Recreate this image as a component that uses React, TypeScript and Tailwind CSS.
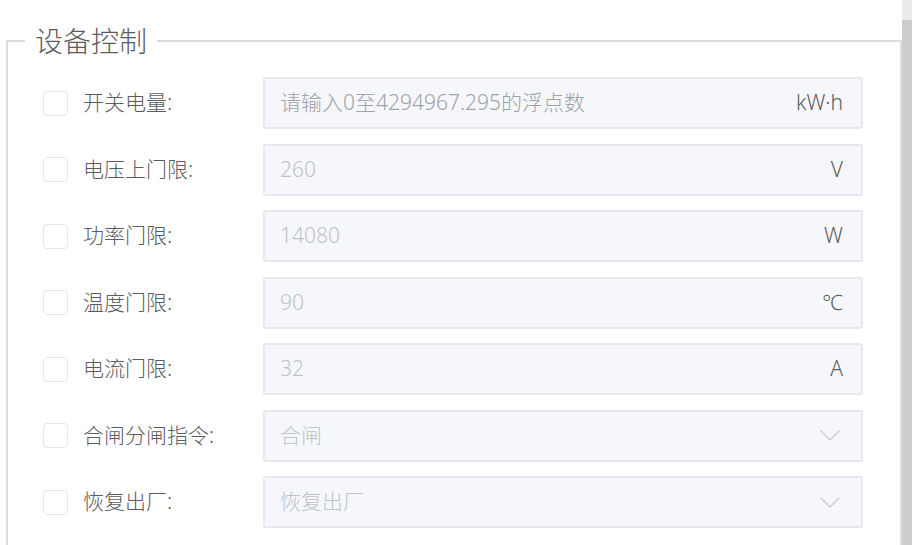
const font = { fontFamily: '"Noto Sans", "Noto Sans CJK SC", sans-serif' };

type Row = {
  label: string;
  kind: "input" | "select";
  value: string;
  placeholder?: boolean;
  unit?: string;
};

const rows: Row[] = [
  { label: "开关电量:", kind: "input", value: "请输入0至4294967.295的浮点数", placeholder: true, unit: "kW·h" },
  { label: "电压上门限:", kind: "input", value: "260", unit: "V" },
  { label: "功率门限:", kind: "input", value: "14080", unit: "W" },
  { label: "温度门限:", kind: "input", value: "90", unit: "℃" },
  { label: "电流门限:", kind: "input", value: "32", unit: "A" },
  { label: "合闸分闸指令:", kind: "select", value: "合闸" },
  { label: "恢复出厂:", kind: "select", value: "恢复出厂" },
];

function Chevron() {
  return (
    <svg width="20" height="11" viewBox="0 0 20 11" fill="none" className="mr-[21px] shrink-0">
      <path d="M1 1 L10 10 L19 1" stroke="#c8ccd3" strokeWidth="1.3" strokeLinecap="round" strokeLinejoin="round" />
    </svg>
  );
}

function FormRow({ row }: { row: Row }) {
  return (
    <div className="flex h-[52px] items-center">
      <span className="h-[25px] w-[25px] shrink-0 rounded-[4px] border-[1.5px] border-[#e2e5eb] bg-white" />
      <span className="ml-[15px] w-[180px] shrink-0 text-[21px] font-light text-[#5a5c61]">{row.label}</span>
      <div className="flex h-[52px] w-[600px] items-center justify-between rounded-[2px] border-2 border-[#e6e9ef] bg-[#f5f7fa] pl-[15px]">
        <span className={`text-[21px] font-light ${row.placeholder ? "text-[#9fa2a9]" : "text-[#bfc3ca]"}`}>{row.value}</span>
        {row.kind === "input" ? (
          <span className="pr-[18px] text-[21px] font-light text-[#5a5c61]">{row.unit}</span>
        ) : (
          <Chevron />
        )}
      </div>
    </div>
  );
}

export default function App() {
  return (
    <div className="flex h-[545px] w-[912px] overflow-hidden bg-white" style={font}>
      <div className="flex-1 pl-[6px] pt-[21px]">
        <fieldset className="h-[600px] border-2 border-[#dcdcdc] pb-6">
          <legend className="ml-[17px] px-[10px] text-[28px] font-light leading-[40px] text-[#5a5c61]">设备控制</legend>
          <div className="flex flex-col gap-[14.5px] pl-[35px] pt-[16px]">
            {rows.map((row) => (
              <FormRow key={row.label} row={row} />
            ))}
          </div>
        </fieldset>
      </div>
      <div className="flex w-[10px] flex-col">
        <div className="h-[20px] bg-[#ebebeb]" />
        <div className="flex-1 bg-[#cdcdcd]" />
      </div>
    </div>
  );
}
